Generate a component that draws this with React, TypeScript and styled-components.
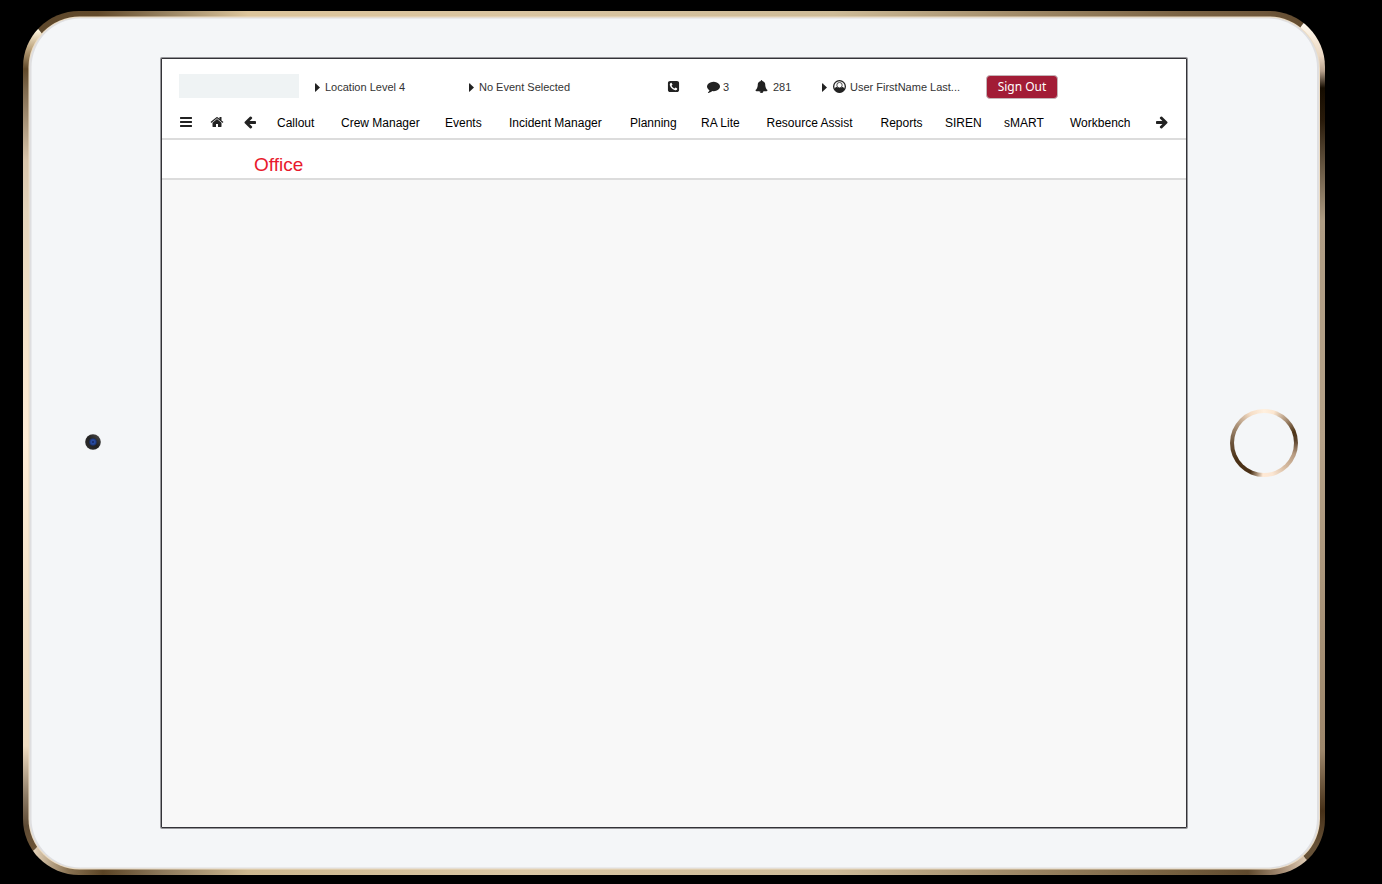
import React from "react";
import styled, { createGlobalStyle } from "styled-components";

const Global = createGlobalStyle`
  body { margin: 0; background: #000; overflow: hidden; }
  * { box-sizing: border-box; }
`;

const Page = styled.div`
  width: 1382px;
  height: 884px;
  padding: 11px 0 0 23px;
  font-family: "Liberation Sans", Arial, sans-serif;
`;

const Tablet = styled.div`
  position: relative;
  width: 1302px;
  height: 864px;
  display: grid;
  grid-template-columns: 138px 1026px 138px;
  align-items: center;
`;

const Bezel = styled.svg`
  position: absolute;
  inset: 0;
  display: block;
`;

const Side = styled.div<{ $pad: number; $lift?: number }>`
  position: relative;
  display: flex;
  padding-left: ${(p) => p.$pad}px;
  padding-bottom: ${(p) => p.$lift ?? 0}px;
`;

const Screen = styled.main`
  position: relative;
  align-self: start;
  margin-top: 47px;
  height: 770px;
  border: 1px solid #333338;
  border-radius: 1px;
  box-shadow: 0 0 0 1px #97979b;
  background: #f8f8f8;
  display: flex;
  flex-direction: column;
`;

const TopBar = styled.header`
  height: 44px;
  padding: 15px 0 0 17px;
  background: #fff;
  display: grid;
  grid-template-columns: 136px 154px 198px 40px 48px 67px 164px 72px;
  align-items: start;
`;

const LogoSlot = styled.div`
  width: 120px;
  height: 24px;
  background: #eff3f4;
`;

const Status = styled.div<{ $gap: number }>`
  height: 26px;
  display: flex;
  align-items: center;
  gap: ${(p) => p.$gap}px;
  color: #333;
  font-size: 11px;
  line-height: 12px;
  white-space: nowrap;
`;

const SignOut = styled.button`
  width: 72px;
  height: 24px;
  margin-top: 1px;
  padding: 0 0 1px;
  border: 1px solid #c4b5b8;
  border-radius: 4px;
  background: #a21c36;
  color: #fff;
  font: 12px/20px "Noto Sans", sans-serif;
`;

const Nav = styled.nav`
  height: 37px;
  padding: 2px 0 0 18px;
  border-bottom: 2px solid #dcdcdc;
  background: #fff;
  display: grid;
  grid-template-columns: 30px 33px 34px 64px 104px 64px 121px 71px 65.5px 114px 64.5px 59px 66px 85px 14px;
  align-items: center;
`;

const NavItem = styled.a`
  color: #000;
  font-size: 12px;
  line-height: 14px;
  white-space: nowrap;
  display: flex;
`;

const NavLink = styled(NavItem)`
  padding-top: 2px;
`;

const TitleBar = styled.div`
  height: 40px;
  padding: 14px 0 0 92px;
  border-bottom: 2px solid #dcdcdc;
  background: #fff;
`;

const Title = styled.h1`
  margin: 0;
  color: #e8192c;
  font-size: 19px;
  line-height: 22px;
  font-weight: 400;
`;

const Glyph = styled.svg`
  display: block;
  flex: none;
  fill: #222;
`;

const icons = {
  bars: "M1664 1344v128q0 26-19 45t-45 19h-1408q-26 0-45-19t-19-45v-128q0-26 19-45t45-19h1408q26 0 45 19t19 45zm0-512v128q0 26-19 45t-45 19h-1408q-26 0-45-19t-19-45v-128q0-26 19-45t45-19h1408q26 0 45 19t19 45zm0-512v128q0 26-19 45t-45 19h-1408q-26 0-45-19t-19-45v-128q0-26 19-45t45-19h1408q26 0 45 19t19 45z",
  home: "M1472 992v480q0 26-19 45t-45 19h-384v-384h-256v384h-384q-26 0-45-19t-19-45v-480q0-1 .5-3t.5-3l575-474 575 474q1 2 1 6zm223-69l-62 74q-8 9-21 11h-3q-13 0-21-7l-692-577-692 577q-12 8-24 7-13-2-21-11l-62-74q-8-10-7-23.5t11-21.5l719-599q32-26 76-26t76 26l244 204v-195q0-14 9-23t23-9h192q14 0 23 9t9 23v408l219 182q10 8 11 21.5t-7 23.5z",
  arrow: "M1664 896v128q0 53-32.5 90.5t-84.5 37.5h-704l293 294q38 36 38 90t-38 90l-75 76q-37 37-90 37-52 0-91-37l-651-652q-37-37-37-90 0-52 37-91l651-650q38-38 91-38 52 0 90 38l75 74q38 38 38 91t-38 91l-293 293h704q52 0 84.5 37.5t32.5 90.5z",
  phone: "M1408 1193q0-11-2-16t-18-16.5-40.5-25-47.5-26.5-45.5-25-28.5-15q-5-3-19-13t-25-15-21-5q-15 0-36.5 20.5t-39.5 45-38.5 45-33.5 20.5q-7 0-16.5-3.5t-15.5-6.5-17-9.5-14-8.5q-99-55-170-126.5t-127-170.5q-2-3-8.5-14t-9.5-17-6.5-15.5-3.5-16.5q0-13 20.5-33.5t45-38.5 45-39.5 20.5-36.5q0-10-5-21t-15-25-13-19q-3-6-15-28.5t-25-45.5-26.5-47.5-25-40.5-16.5-18-16-2q-48 0-101 22-46 21-80 94.5t-34 130.5q0 16 2.5 34t5 30.5 9 33 10 29.5 12.5 33 11 30q60 164 216.5 320.5t320.5 216.5q6 2 30 11t33 12.5 29.5 10 33 9 30.5 5 34 2.5q57 0 130.5-34t94.5-80q22-53 22-101zm256-777v960q0 119-84.5 203.5t-203.5 84.5h-960q-119 0-203.5-84.5t-84.5-203.5v-960q0-119 84.5-203.5t203.5-84.5h960q119 0 203.5 84.5t84.5 203.5z",
  comment: "M1792 896q0 174-120 321.5t-326 233-450 85.5q-70 0-145-8-198 175-460 242-49 14-114 22-17 2-30.5-9t-17.5-29v-1q-3-4-.5-12t2-10 4.5-9.5l6-9 7-8.5 8-9q7-8 31-34.5t34.5-38 31-39.5 32.5-51 27-59 26-76q-157-89-247.5-220t-90.5-281q0-130 71-248.5t191-204.5 286-136.5 348-50.5q244 0 450 85.5t326 233 120 321.5z",
  bell: "M912 1696q0-16-16-16-59 0-101.5-42.5t-42.5-101.5q0-16-16-16t-16 16q0 73 51.5 124.5t124.5 51.5q16 0 16-16zm816-288q0 52-38 90t-90 38h-448q0 106-75 181t-181 75-181-75-75-181h-448q-52 0-90-38t-38-90q50-42 91-88t85-119.5 74.5-158.5 50-206 19.5-260q0-152 117-282.5t307-158.5q-8-19-8-39 0-40 28-68t68-28 68 28 28 68q0 20-8 39 190 28 307 158.5t117 282.5q0 139 19.5 260t50 206 74.5 158.5 85 119.5 91 88z",
};

type IconProps = { name: keyof typeof icons; size?: number; flip?: boolean; box?: string };

const Icon = ({ name, size = 13, flip, box = "0 0 1792 1792" }: IconProps) => (
  <Glyph width={size} height={size} viewBox={box}>
    <path d={icons[name]} transform={flip ? "matrix(-1 0 0 1 1792 0)" : undefined} />
  </Glyph>
);

const Caret = () => (
  <Glyph width="5" height="9" viewBox="0 0 5 9">
    <path d="M0 .5Q0 0 .7.4L5 4.5.7 8.6Q0 9 0 8.5z" />
  </Glyph>
);

const StatusGlyph = styled.span`
  display: flex;
  padding-bottom: 1px;
`;

const UserGlyph = styled(Glyph)`
  margin: 0 -1px 1px 1px;
`;

const UserIcon = () => (
  <UserGlyph width="13" height="13" viewBox="0 0 26 26">
    <circle cx="13" cy="13" r="11.700" fill="#fff" stroke="#222" strokeWidth="2.600" />
    <path d="M2.500 18Q4 14 8.200 13.500 10 16 13 16t4.800-2.500Q22 14 23.500 18 19.500 25 13 25T2.500 18z" />
    <circle cx="13" cy="10.300" r="5.400" fill="#fff" stroke="#222" strokeWidth="1.600" />
  </UserGlyph>
);

const sections = [
  "Callout", "Crew Manager", "Events", "Incident Manager", "Planning", "RA Lite",
  "Resource Assist", "Reports", "SIREN", "sMART", "Workbench",
];

type Stop = [number, string];
const Gradient = ({ id, vertical, stops }: { id: string; vertical?: boolean; stops: Stop[] }) => (
  <linearGradient id={id} gradientUnits="userSpaceOnUse" x1="0" y1="0" x2={vertical ? 0 : 1302} y2={vertical ? 864 : 0}>
    {stops.map(([at, color]) => (
      <stop key={at} offset={at / (vertical ? 864 : 1302)} stopColor={color} />
    ))}
  </linearGradient>
);

const TabletBezel = () => (
  <Bezel width="1302" height="864" viewBox="0 0 1302 864">
    <defs>
      <Gradient id="top" stops={[[30, "#5e482c"], [75, "#624a2b"], [140, "#95805f"], [225, "#dcc59c"], [500, "#d9c5a2"], [810, "#cdbb98"], [1000, "#a08a68"], [1160, "#7a6344"], [1240, "#6e573b"], [1290, "#5f482c"]]} />
      <Gradient id="bottom" stops={[[12, "#e0ceb4"], [45, "#8a7353"], [80, "#5b4425"], [140, "#8e7a5c"], [225, "#cdb88f"], [500, "#dac7a4"], [810, "#cdbb98"], [1000, "#9c8664"], [1150, "#76603f"], [1225, "#604a2e"], [1260, "#a99078"], [1284, "#dfccb5"]]} />
      <Gradient id="left" vertical stops={[[19, "#fff6df"], [38, "#baa17a"], [58, "#60492a"], [80, "#806b4f"], [150, "#d9c5ab"], [200, "#e4d4bb"], [300, "#f2e0c6"], [430, "#feecd6"], [600, "#f3e2c9"], [735, "#f0ddc2"], [785, "#8d7b65"], [815, "#5d4a34"], [838, "#6d5537"]]} />
      <Gradient id="right" vertical stops={[[14, "#fff8ec"], [45, "#ead7c2"], [60, "#b7a18d"], [77, "#150c00"], [110, "#291b0b"], [160, "#6c5c47"], [210, "#ae9c84"], [430, "#b4a188"], [740, "#9c866b"], [800, "#463018"], [835, "#675238"], [850, "#675238"]]} />
      <clipPath id="shape"><rect width="1302" height="864" rx="56" /></clipPath>
    </defs>
    <g clipPath="url(#shape)">
      <path d="M0 0L17 20 100 130H1200L1279 14 1291 0z" fill="url(#top)" />
      <path d="M0 0L17 20 100 130V740L12 838 0 848z" fill="url(#left)" />
      <path d="M1291 0L1279 14 1200 130V740L1283 848 1302 864V0z" fill="url(#right)" />
      <path d="M0 848L12 838 100 740H1200L1283 848 1302 864H0z" fill="url(#bottom)" />
    </g>
    <rect x="5.500" y="5.500" width="1291.500" height="853" rx="51" fill="#ecdcc3" />
    <rect x="6.500" y="6.500" width="1289.500" height="851" rx="50" fill="#dfdfe1" />
    <rect x="8.500" y="7.500" width="1285.500" height="849" rx="49" fill="#f4f6f8" />
  </Bezel>
);

const Camera = () => (
  <svg width="16" height="16" viewBox="0 0 16 16">
    <defs>
      <radialGradient id="lens">
        <stop offset="0" stopColor="#101c50" />
        <stop offset=".45" stopColor="#2a4fa8" />
        <stop offset="1" stopColor="#1b2f63" />
      </radialGradient>
      <linearGradient id="rim" x1="1" y1="0" x2="0" y2="1">
        <stop stopColor="#505050" />
        <stop offset=".5" stopColor="#222" />
        <stop offset="1" stopColor="#303030" />
      </linearGradient>
    </defs>
    <circle cx="8" cy="8" r="7.800" fill="url(#rim)" />
    <circle cx="8" cy="8" r="3.800" fill="url(#lens)" />
  </svg>
);

const HomeButton = styled.div`
  width: 68px;
  height: 68px;
  padding: 4px;
  border-radius: 50%;
  background: conic-gradient(#fff0df 0deg, #fbe6d0 18deg, #a58b71 45deg, #4d3418 70deg, #59422b 85deg, #b69a80 110deg, #d8bda3 140deg, #fbe6d3 165deg, #ffe9d5 182deg, #b49c84 191deg, #4a3117 205deg, #4a3117 240deg, #6c543b 270deg, #af967d 305deg, #f5ddc5 335deg, #fff0df 360deg);
  &::after {
    content: "";
    display: block;
    height: 60px;
    border-radius: 50%;
    background: #f4f6f8;
  }
`;

export default function App() {
  return (
    <Page>
      <Global />
      <Tablet>
        <TabletBezel />
        <Side $pad={62} $lift={2}><Camera /></Side>
        <Screen>
          <TopBar>
            <LogoSlot />
            <Status $gap={5}><Caret />Location Level 4</Status>
            <Status $gap={5}><Caret />No Event Selected</Status>
            <Status $gap={4}><StatusGlyph><Icon name="phone" /></StatusGlyph></Status>
            <Status $gap={3}><StatusGlyph><Icon name="comment" /></StatusGlyph>3</Status>
            <Status $gap={5}><StatusGlyph><Icon name="bell" /></StatusGlyph>281</Status>
            <Status $gap={5}><Caret /><UserIcon />User FirstName Last...</Status>
            <SignOut>Sign Out</SignOut>
          </TopBar>
          <Nav>
            <NavItem><Icon name="bars" size={14} box="128 0 1792 1792" /></NavItem>
            <NavItem><Icon name="home" size={14} /></NavItem>
            <NavItem><Icon name="arrow" size={14} /></NavItem>
            {sections.map((s) => <NavLink key={s}>{s}</NavLink>)}
            <NavItem><Icon name="arrow" size={14} flip /></NavItem>
          </Nav>
          <TitleBar><Title>Office</Title></TitleBar>
        </Screen>
        <Side $pad={43}><HomeButton /></Side>
      </Tablet>
    </Page>
  );
}
